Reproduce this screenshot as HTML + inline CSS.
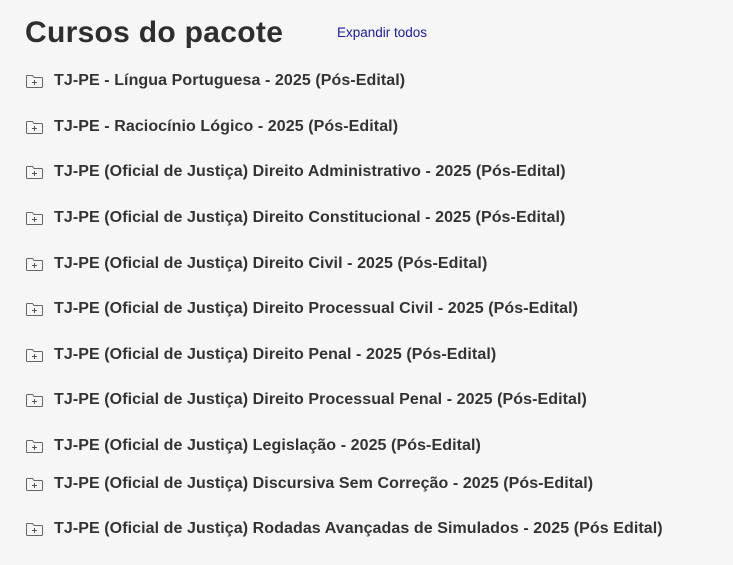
<!DOCTYPE html>
<html><head><style>
body{margin:0;background:#f6f6f6;width:733px;height:565px;overflow:hidden;font-family:"Liberation Sans",sans-serif;color:#333}
h1{position:absolute;left:25px;top:16px;margin:0;font-size:30px;font-weight:bold;color:#2e2e2e;letter-spacing:0.3px}
.exp{position:absolute;left:337px;top:25px;font-size:13.5px;color:#1a1aa8}
.r{position:absolute;left:25px;height:20px;display:flex;align-items:center;font-size:16px;font-weight:bold;color:#333;white-space:nowrap;letter-spacing:0.08px}
.r svg{margin-right:10px}
</style></head><body>
<h1>Cursos do pacote</h1>
<div class="exp">Expandir todos</div>
<div class="r" style="top:71px"><svg width="19" height="16" viewBox="0 0 19 16"><path d="M1.5 3.5V13.5a1 1 0 0 0 1 1h14a1 1 0 0 0 1-1V5.5a1 1 0 0 0-1-1H9L7.5 2.5H2.5a1 1 0 0 0-1 1z" fill="none" stroke="#666" stroke-width="1"/><path d="M7 9.5h5M9.5 7v5" stroke="#555" stroke-width="1"/></svg>TJ-PE - Língua Portuguesa - 2025 (Pós-Edital)</div>
<div class="r" style="top:117px"><svg width="19" height="16" viewBox="0 0 19 16"><path d="M1.5 3.5V13.5a1 1 0 0 0 1 1h14a1 1 0 0 0 1-1V5.5a1 1 0 0 0-1-1H9L7.5 2.5H2.5a1 1 0 0 0-1 1z" fill="none" stroke="#666" stroke-width="1"/><path d="M7 9.5h5M9.5 7v5" stroke="#555" stroke-width="1"/></svg>TJ-PE - Raciocínio Lógico - 2025 (Pós-Edital)</div>
<div class="r" style="top:162px"><svg width="19" height="16" viewBox="0 0 19 16"><path d="M1.5 3.5V13.5a1 1 0 0 0 1 1h14a1 1 0 0 0 1-1V5.5a1 1 0 0 0-1-1H9L7.5 2.5H2.5a1 1 0 0 0-1 1z" fill="none" stroke="#666" stroke-width="1"/><path d="M7 9.5h5M9.5 7v5" stroke="#555" stroke-width="1"/></svg>TJ-PE (Oficial de Justiça) Direito Administrativo - 2025 (Pós-Edital)</div>
<div class="r" style="top:208px"><svg width="19" height="16" viewBox="0 0 19 16"><path d="M1.5 3.5V13.5a1 1 0 0 0 1 1h14a1 1 0 0 0 1-1V5.5a1 1 0 0 0-1-1H9L7.5 2.5H2.5a1 1 0 0 0-1 1z" fill="none" stroke="#666" stroke-width="1"/><path d="M7 9.5h5M9.5 7v5" stroke="#555" stroke-width="1"/></svg>TJ-PE (Oficial de Justiça) Direito Constitucional - 2025 (Pós-Edital)</div>
<div class="r" style="top:254px"><svg width="19" height="16" viewBox="0 0 19 16"><path d="M1.5 3.5V13.5a1 1 0 0 0 1 1h14a1 1 0 0 0 1-1V5.5a1 1 0 0 0-1-1H9L7.5 2.5H2.5a1 1 0 0 0-1 1z" fill="none" stroke="#666" stroke-width="1"/><path d="M7 9.5h5M9.5 7v5" stroke="#555" stroke-width="1"/></svg>TJ-PE (Oficial de Justiça) Direito Civil - 2025 (Pós-Edital)</div>
<div class="r" style="top:299px"><svg width="19" height="16" viewBox="0 0 19 16"><path d="M1.5 3.5V13.5a1 1 0 0 0 1 1h14a1 1 0 0 0 1-1V5.5a1 1 0 0 0-1-1H9L7.5 2.5H2.5a1 1 0 0 0-1 1z" fill="none" stroke="#666" stroke-width="1"/><path d="M7 9.5h5M9.5 7v5" stroke="#555" stroke-width="1"/></svg>TJ-PE (Oficial de Justiça) Direito Processual Civil - 2025 (Pós-Edital)</div>
<div class="r" style="top:345px"><svg width="19" height="16" viewBox="0 0 19 16"><path d="M1.5 3.5V13.5a1 1 0 0 0 1 1h14a1 1 0 0 0 1-1V5.5a1 1 0 0 0-1-1H9L7.5 2.5H2.5a1 1 0 0 0-1 1z" fill="none" stroke="#666" stroke-width="1"/><path d="M7 9.5h5M9.5 7v5" stroke="#555" stroke-width="1"/></svg>TJ-PE (Oficial de Justiça) Direito Penal - 2025 (Pós-Edital)</div>
<div class="r" style="top:390px"><svg width="19" height="16" viewBox="0 0 19 16"><path d="M1.5 3.5V13.5a1 1 0 0 0 1 1h14a1 1 0 0 0 1-1V5.5a1 1 0 0 0-1-1H9L7.5 2.5H2.5a1 1 0 0 0-1 1z" fill="none" stroke="#666" stroke-width="1"/><path d="M7 9.5h5M9.5 7v5" stroke="#555" stroke-width="1"/></svg>TJ-PE (Oficial de Justiça) Direito Processual Penal - 2025 (Pós-Edital)</div>
<div class="r" style="top:436px"><svg width="19" height="16" viewBox="0 0 19 16"><path d="M1.5 3.5V13.5a1 1 0 0 0 1 1h14a1 1 0 0 0 1-1V5.5a1 1 0 0 0-1-1H9L7.5 2.5H2.5a1 1 0 0 0-1 1z" fill="none" stroke="#666" stroke-width="1"/><path d="M7 9.5h5M9.5 7v5" stroke="#555" stroke-width="1"/></svg>TJ-PE (Oficial de Justiça) Legislação - 2025 (Pós-Edital)</div>
<div class="r" style="top:474px"><svg width="19" height="16" viewBox="0 0 19 16"><path d="M1.5 3.5V13.5a1 1 0 0 0 1 1h14a1 1 0 0 0 1-1V5.5a1 1 0 0 0-1-1H9L7.5 2.5H2.5a1 1 0 0 0-1 1z" fill="none" stroke="#666" stroke-width="1"/><path d="M7 9.5h5M9.5 7v5" stroke="#555" stroke-width="1"/></svg>TJ-PE (Oficial de Justiça) Discursiva Sem Correção - 2025 (Pós-Edital)</div>
<div class="r" style="top:519px"><svg width="19" height="16" viewBox="0 0 19 16"><path d="M1.5 3.5V13.5a1 1 0 0 0 1 1h14a1 1 0 0 0 1-1V5.5a1 1 0 0 0-1-1H9L7.5 2.5H2.5a1 1 0 0 0-1 1z" fill="none" stroke="#666" stroke-width="1"/><path d="M7 9.5h5M9.5 7v5" stroke="#555" stroke-width="1"/></svg>TJ-PE (Oficial de Justiça) Rodadas Avançadas de Simulados - 2025 (Pós Edital)</div>
</body></html>
